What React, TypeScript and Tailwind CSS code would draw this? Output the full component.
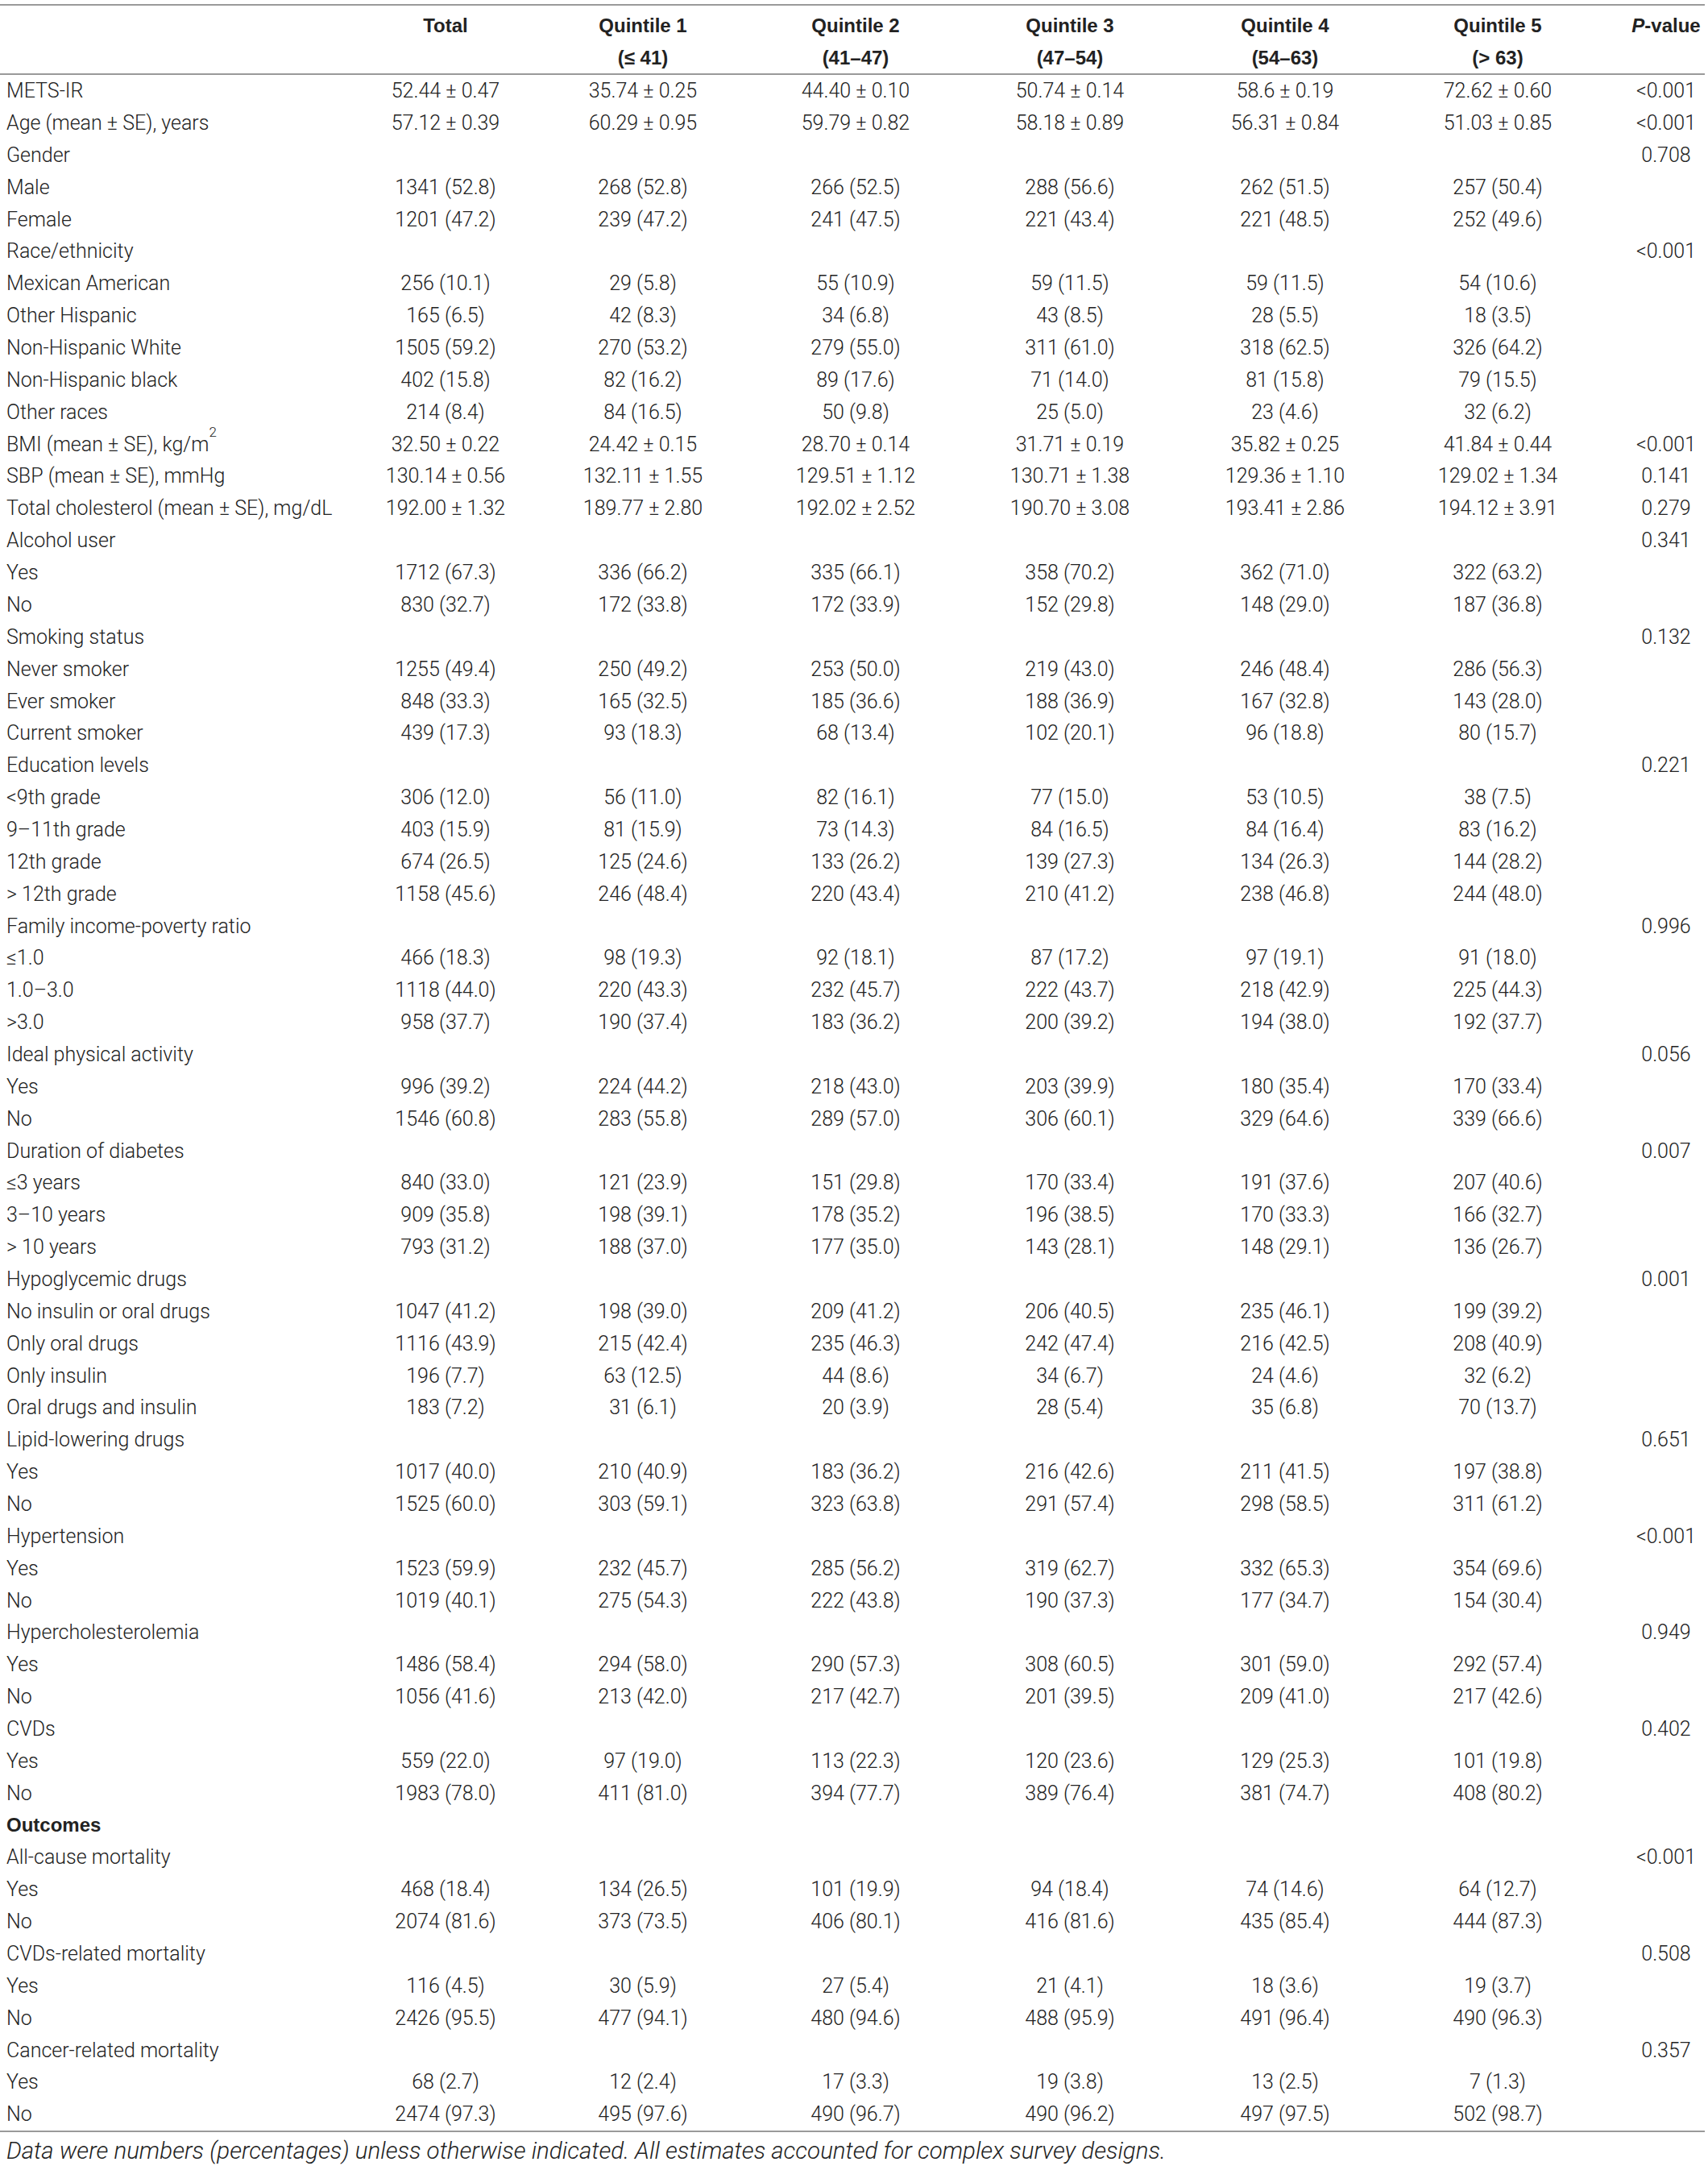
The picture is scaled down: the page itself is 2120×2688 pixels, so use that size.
import type { ReactNode } from 'react';

type Row = {
  label: ReactNode;
  values?: string[];
  p?: string;
  bold?: boolean;
};

const cols = 'grid grid-cols-[438px_230px_260px_268px_264px_270px_258px_128px]';

const r = (label: ReactNode, values: string[], p = ''): Row => ({ label, values, p });
const g = (label: ReactNode, p = ''): Row => ({ label, p });

const rows: Row[] = [
  r('METS-IR', ['52.44 ± 0.47', '35.74 ± 0.25', '44.40 ± 0.10', '50.74 ± 0.14', '58.6 ± 0.19', '72.62 ± 0.60'], '<0.001'),
  r('Age (mean ± SE), years', ['57.12 ± 0.39', '60.29 ± 0.95', '59.79 ± 0.82', '58.18 ± 0.89', '56.31 ± 0.84', '51.03 ± 0.85'], '<0.001'),
  g('Gender', '0.708'),
  r('Male', ['1341 (52.8)', '268 (52.8)', '266 (52.5)', '288 (56.6)', '262 (51.5)', '257 (50.4)']),
  r('Female', ['1201 (47.2)', '239 (47.2)', '241 (47.5)', '221 (43.4)', '221 (48.5)', '252 (49.6)']),
  g('Race/ethnicity', '<0.001'),
  r('Mexican American', ['256 (10.1)', '29 (5.8)', '55 (10.9)', '59 (11.5)', '59 (11.5)', '54 (10.6)']),
  r('Other Hispanic', ['165 (6.5)', '42 (8.3)', '34 (6.8)', '43 (8.5)', '28 (5.5)', '18 (3.5)']),
  r('Non-Hispanic White', ['1505 (59.2)', '270 (53.2)', '279 (55.0)', '311 (61.0)', '318 (62.5)', '326 (64.2)']),
  r('Non-Hispanic black', ['402 (15.8)', '82 (16.2)', '89 (17.6)', '71 (14.0)', '81 (15.8)', '79 (15.5)']),
  r('Other races', ['214 (8.4)', '84 (16.5)', '50 (9.8)', '25 (5.0)', '23 (4.6)', '32 (6.2)']),
  r(
    <>
      BMI (mean ± SE), kg/m<sup className="text-[17px] align-[9px]">2</sup>
    </>,
    ['32.50 ± 0.22', '24.42 ± 0.15', '28.70 ± 0.14', '31.71 ± 0.19', '35.82 ± 0.25', '41.84 ± 0.44'],
    '<0.001'
  ),
  r('SBP (mean ± SE), mmHg', ['130.14 ± 0.56', '132.11 ± 1.55', '129.51 ± 1.12', '130.71 ± 1.38', '129.36 ± 1.10', '129.02 ± 1.34'], '0.141'),
  r('Total cholesterol (mean ± SE), mg/dL', ['192.00 ± 1.32', '189.77 ± 2.80', '192.02 ± 2.52', '190.70 ± 3.08', '193.41 ± 2.86', '194.12 ± 3.91'], '0.279'),
  g('Alcohol user', '0.341'),
  r('Yes', ['1712 (67.3)', '336 (66.2)', '335 (66.1)', '358 (70.2)', '362 (71.0)', '322 (63.2)']),
  r('No', ['830 (32.7)', '172 (33.8)', '172 (33.9)', '152 (29.8)', '148 (29.0)', '187 (36.8)']),
  g('Smoking status', '0.132'),
  r('Never smoker', ['1255 (49.4)', '250 (49.2)', '253 (50.0)', '219 (43.0)', '246 (48.4)', '286 (56.3)']),
  r('Ever smoker', ['848 (33.3)', '165 (32.5)', '185 (36.6)', '188 (36.9)', '167 (32.8)', '143 (28.0)']),
  r('Current smoker', ['439 (17.3)', '93 (18.3)', '68 (13.4)', '102 (20.1)', '96 (18.8)', '80 (15.7)']),
  g('Education levels', '0.221'),
  r('<9th grade', ['306 (12.0)', '56 (11.0)', '82 (16.1)', '77 (15.0)', '53 (10.5)', '38 (7.5)']),
  r('9–11th grade', ['403 (15.9)', '81 (15.9)', '73 (14.3)', '84 (16.5)', '84 (16.4)', '83 (16.2)']),
  r('12th grade', ['674 (26.5)', '125 (24.6)', '133 (26.2)', '139 (27.3)', '134 (26.3)', '144 (28.2)']),
  r('> 12th grade', ['1158 (45.6)', '246 (48.4)', '220 (43.4)', '210 (41.2)', '238 (46.8)', '244 (48.0)']),
  g('Family income-poverty ratio', '0.996'),
  r('≤1.0', ['466 (18.3)', '98 (19.3)', '92 (18.1)', '87 (17.2)', '97 (19.1)', '91 (18.0)']),
  r('1.0–3.0', ['1118 (44.0)', '220 (43.3)', '232 (45.7)', '222 (43.7)', '218 (42.9)', '225 (44.3)']),
  r('>3.0', ['958 (37.7)', '190 (37.4)', '183 (36.2)', '200 (39.2)', '194 (38.0)', '192 (37.7)']),
  g('Ideal physical activity', '0.056'),
  r('Yes', ['996 (39.2)', '224 (44.2)', '218 (43.0)', '203 (39.9)', '180 (35.4)', '170 (33.4)']),
  r('No', ['1546 (60.8)', '283 (55.8)', '289 (57.0)', '306 (60.1)', '329 (64.6)', '339 (66.6)']),
  g('Duration of diabetes', '0.007'),
  r('≤3 years', ['840 (33.0)', '121 (23.9)', '151 (29.8)', '170 (33.4)', '191 (37.6)', '207 (40.6)']),
  r('3–10 years', ['909 (35.8)', '198 (39.1)', '178 (35.2)', '196 (38.5)', '170 (33.3)', '166 (32.7)']),
  r('> 10 years', ['793 (31.2)', '188 (37.0)', '177 (35.0)', '143 (28.1)', '148 (29.1)', '136 (26.7)']),
  g('Hypoglycemic drugs', '0.001'),
  r('No insulin or oral drugs', ['1047 (41.2)', '198 (39.0)', '209 (41.2)', '206 (40.5)', '235 (46.1)', '199 (39.2)']),
  r('Only oral drugs', ['1116 (43.9)', '215 (42.4)', '235 (46.3)', '242 (47.4)', '216 (42.5)', '208 (40.9)']),
  r('Only insulin', ['196 (7.7)', '63 (12.5)', '44 (8.6)', '34 (6.7)', '24 (4.6)', '32 (6.2)']),
  r('Oral drugs and insulin', ['183 (7.2)', '31 (6.1)', '20 (3.9)', '28 (5.4)', '35 (6.8)', '70 (13.7)']),
  g('Lipid-lowering drugs', '0.651'),
  r('Yes', ['1017 (40.0)', '210 (40.9)', '183 (36.2)', '216 (42.6)', '211 (41.5)', '197 (38.8)']),
  r('No', ['1525 (60.0)', '303 (59.1)', '323 (63.8)', '291 (57.4)', '298 (58.5)', '311 (61.2)']),
  g('Hypertension', '<0.001'),
  r('Yes', ['1523 (59.9)', '232 (45.7)', '285 (56.2)', '319 (62.7)', '332 (65.3)', '354 (69.6)']),
  r('No', ['1019 (40.1)', '275 (54.3)', '222 (43.8)', '190 (37.3)', '177 (34.7)', '154 (30.4)']),
  g('Hypercholesterolemia', '0.949'),
  r('Yes', ['1486 (58.4)', '294 (58.0)', '290 (57.3)', '308 (60.5)', '301 (59.0)', '292 (57.4)']),
  r('No', ['1056 (41.6)', '213 (42.0)', '217 (42.7)', '201 (39.5)', '209 (41.0)', '217 (42.6)']),
  g('CVDs', '0.402'),
  r('Yes', ['559 (22.0)', '97 (19.0)', '113 (22.3)', '120 (23.6)', '129 (25.3)', '101 (19.8)']),
  r('No', ['1983 (78.0)', '411 (81.0)', '394 (77.7)', '389 (76.4)', '381 (74.7)', '408 (80.2)']),
  { label: 'Outcomes', bold: true },
  g('All-cause mortality', '<0.001'),
  r('Yes', ['468 (18.4)', '134 (26.5)', '101 (19.9)', '94 (18.4)', '74 (14.6)', '64 (12.7)']),
  r('No', ['2074 (81.6)', '373 (73.5)', '406 (80.1)', '416 (81.6)', '435 (85.4)', '444 (87.3)']),
  g('CVDs-related mortality', '0.508'),
  r('Yes', ['116 (4.5)', '30 (5.9)', '27 (5.4)', '21 (4.1)', '18 (3.6)', '19 (3.7)']),
  r('No', ['2426 (95.5)', '477 (94.1)', '480 (94.6)', '488 (95.9)', '491 (96.4)', '490 (96.3)']),
  g('Cancer-related mortality', '0.357'),
  r('Yes', ['68 (2.7)', '12 (2.4)', '17 (3.3)', '19 (3.8)', '13 (2.5)', '7 (1.3)']),
  r('No', ['2474 (97.3)', '495 (97.6)', '490 (96.7)', '490 (96.2)', '497 (97.5)', '502 (98.7)']),
];

const headers: [string, string][] = [
  ['Total', ''],
  ['Quintile 1', '(≤ 41)'],
  ['Quintile 2', '(41–47)'],
  ['Quintile 3', '(47–54)'],
  ['Quintile 4', '(54–63)'],
  ['Quintile 5', '(> 63)'],
];

export default function App() {
  return (
    <div className="w-[2120px] min-h-[2688px] bg-white pt-[5px] text-[#222] font-['Roboto',sans-serif]">
      <div className="w-[2116px]">
        {/* Header */}
        <div className={`${cols} border-t-2 border-b-2 border-[#9a9a9a] h-[88px] pt-[5px] leading-[40px] text-[24px] font-bold font-['Liberation_Sans',sans-serif]`}>
          <div />
          {headers.map(([a, b]) => (
            <div key={a} className="text-center">
              <div>{a}</div>
              <div>{b}</div>
            </div>
          ))}
          <div className="text-center pl-[32px]">
            <i>P</i>-value
          </div>
        </div>

        {/* Body */}
        <div className="border-b-2 border-[#9a9a9a] text-[25px] font-light">
          {rows.map((row, i) => (
            <div key={i} className={`${cols} h-[39.86px] items-center`}>
              <div className={`pl-[8px] whitespace-nowrap ${row.bold ? "font-bold text-[24px] font-['Liberation_Sans',sans-serif]" : ''}`}>
                {row.label}
              </div>
              {(row.values ?? ['', '', '', '', '', '']).map((v, j) => (
                <div key={j} className="text-center whitespace-nowrap">
                  {v}
                </div>
              ))}
              <div className="text-center pl-[32px]">{row.p}</div>
            </div>
          ))}
        </div>

        {/* Footnote */}
        <p className="pl-[8px] pt-[3px] leading-[40px] text-[29.5px] font-light italic whitespace-nowrap">
          Data were numbers (percentages) unless otherwise indicated. All estimates accounted for complex survey designs.
        </p>
      </div>
    </div>
  );
}
